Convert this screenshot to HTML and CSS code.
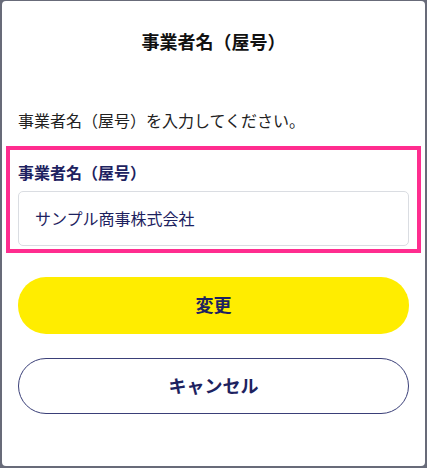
FILE: index.html
```html
<!DOCTYPE html>
<html lang="ja">
<head>
<meta charset="utf-8">
<title>事業者名（屋号）</title>
<link rel="stylesheet" href="styles.css">
</head>
<body>
<div class="dialog">
  <h1 class="title">事業者名（屋号）</h1>
  <p class="lead">事業者名（屋号）を入力してください。</p>
  <div class="highlight">
    <label class="label" for="name">事業者名（屋号）</label>
    <div class="input" id="name">サンプル商事株式会社</div>
  </div>
  <button class="btn btn-primary">変更</button>
  <button class="btn btn-secondary">キャンセル</button>
</div>
</body>
</html>
```
FILE: styles.css
```css
* { box-sizing: border-box; }
html, body { margin: 0; padding: 0; }
body {
  background: #686b79;
  font-family: "Noto Sans CJK JP", "Noto Sans", sans-serif;
  padding: 1px 2px 2px 2px;
  height: 468px;
}
.dialog {
  background: #fff;
  border-radius: 4px;
  height: 465px;
  padding: 27px 16px 0 16px;
  display: flex;
  flex-direction: column;
}
.title {
  margin: 0;
  font-size: 18px;
  line-height: 27px;
  font-weight: 700;
  text-align: center;
  color: #111;
}
.lead {
  margin: 53px 0 14px 0;
  font-size: 16px;
  line-height: 24px;
  color: #222;
}
.highlight {
  border: 4px solid #ff2d8f;
  margin: 0 -12px;
  padding: 10px 8px 3px 8px;
  display: flex;
  flex-direction: column;
}
.label {
  font-size: 16px;
  line-height: 24px;
  font-weight: 700;
  color: #1d2260;
}
.input {
  margin-top: 7px;
  height: 55px;
  border: 1px solid #dadde2;
  border-radius: 5px;
  padding: 0 16px 2px 16px;
  display: flex;
  align-items: center;
  font-size: 16px;
  color: #1d2260;
}
.btn {
  font-family: inherit;
  font-size: 18px;
  font-weight: 700;
  color: #1d2260;
  height: 56px;
  border-radius: 28px;
  margin-top: 24px;
  width: 100%;
  padding: 0 0 3px 0;
  cursor: pointer;
}
.btn-primary {
  background: #ffed00;
  border: none;
  height: 57px;
}
.btn-secondary {
  background: #fff;
  border: 1.5px solid #3a3f78;
}
```
